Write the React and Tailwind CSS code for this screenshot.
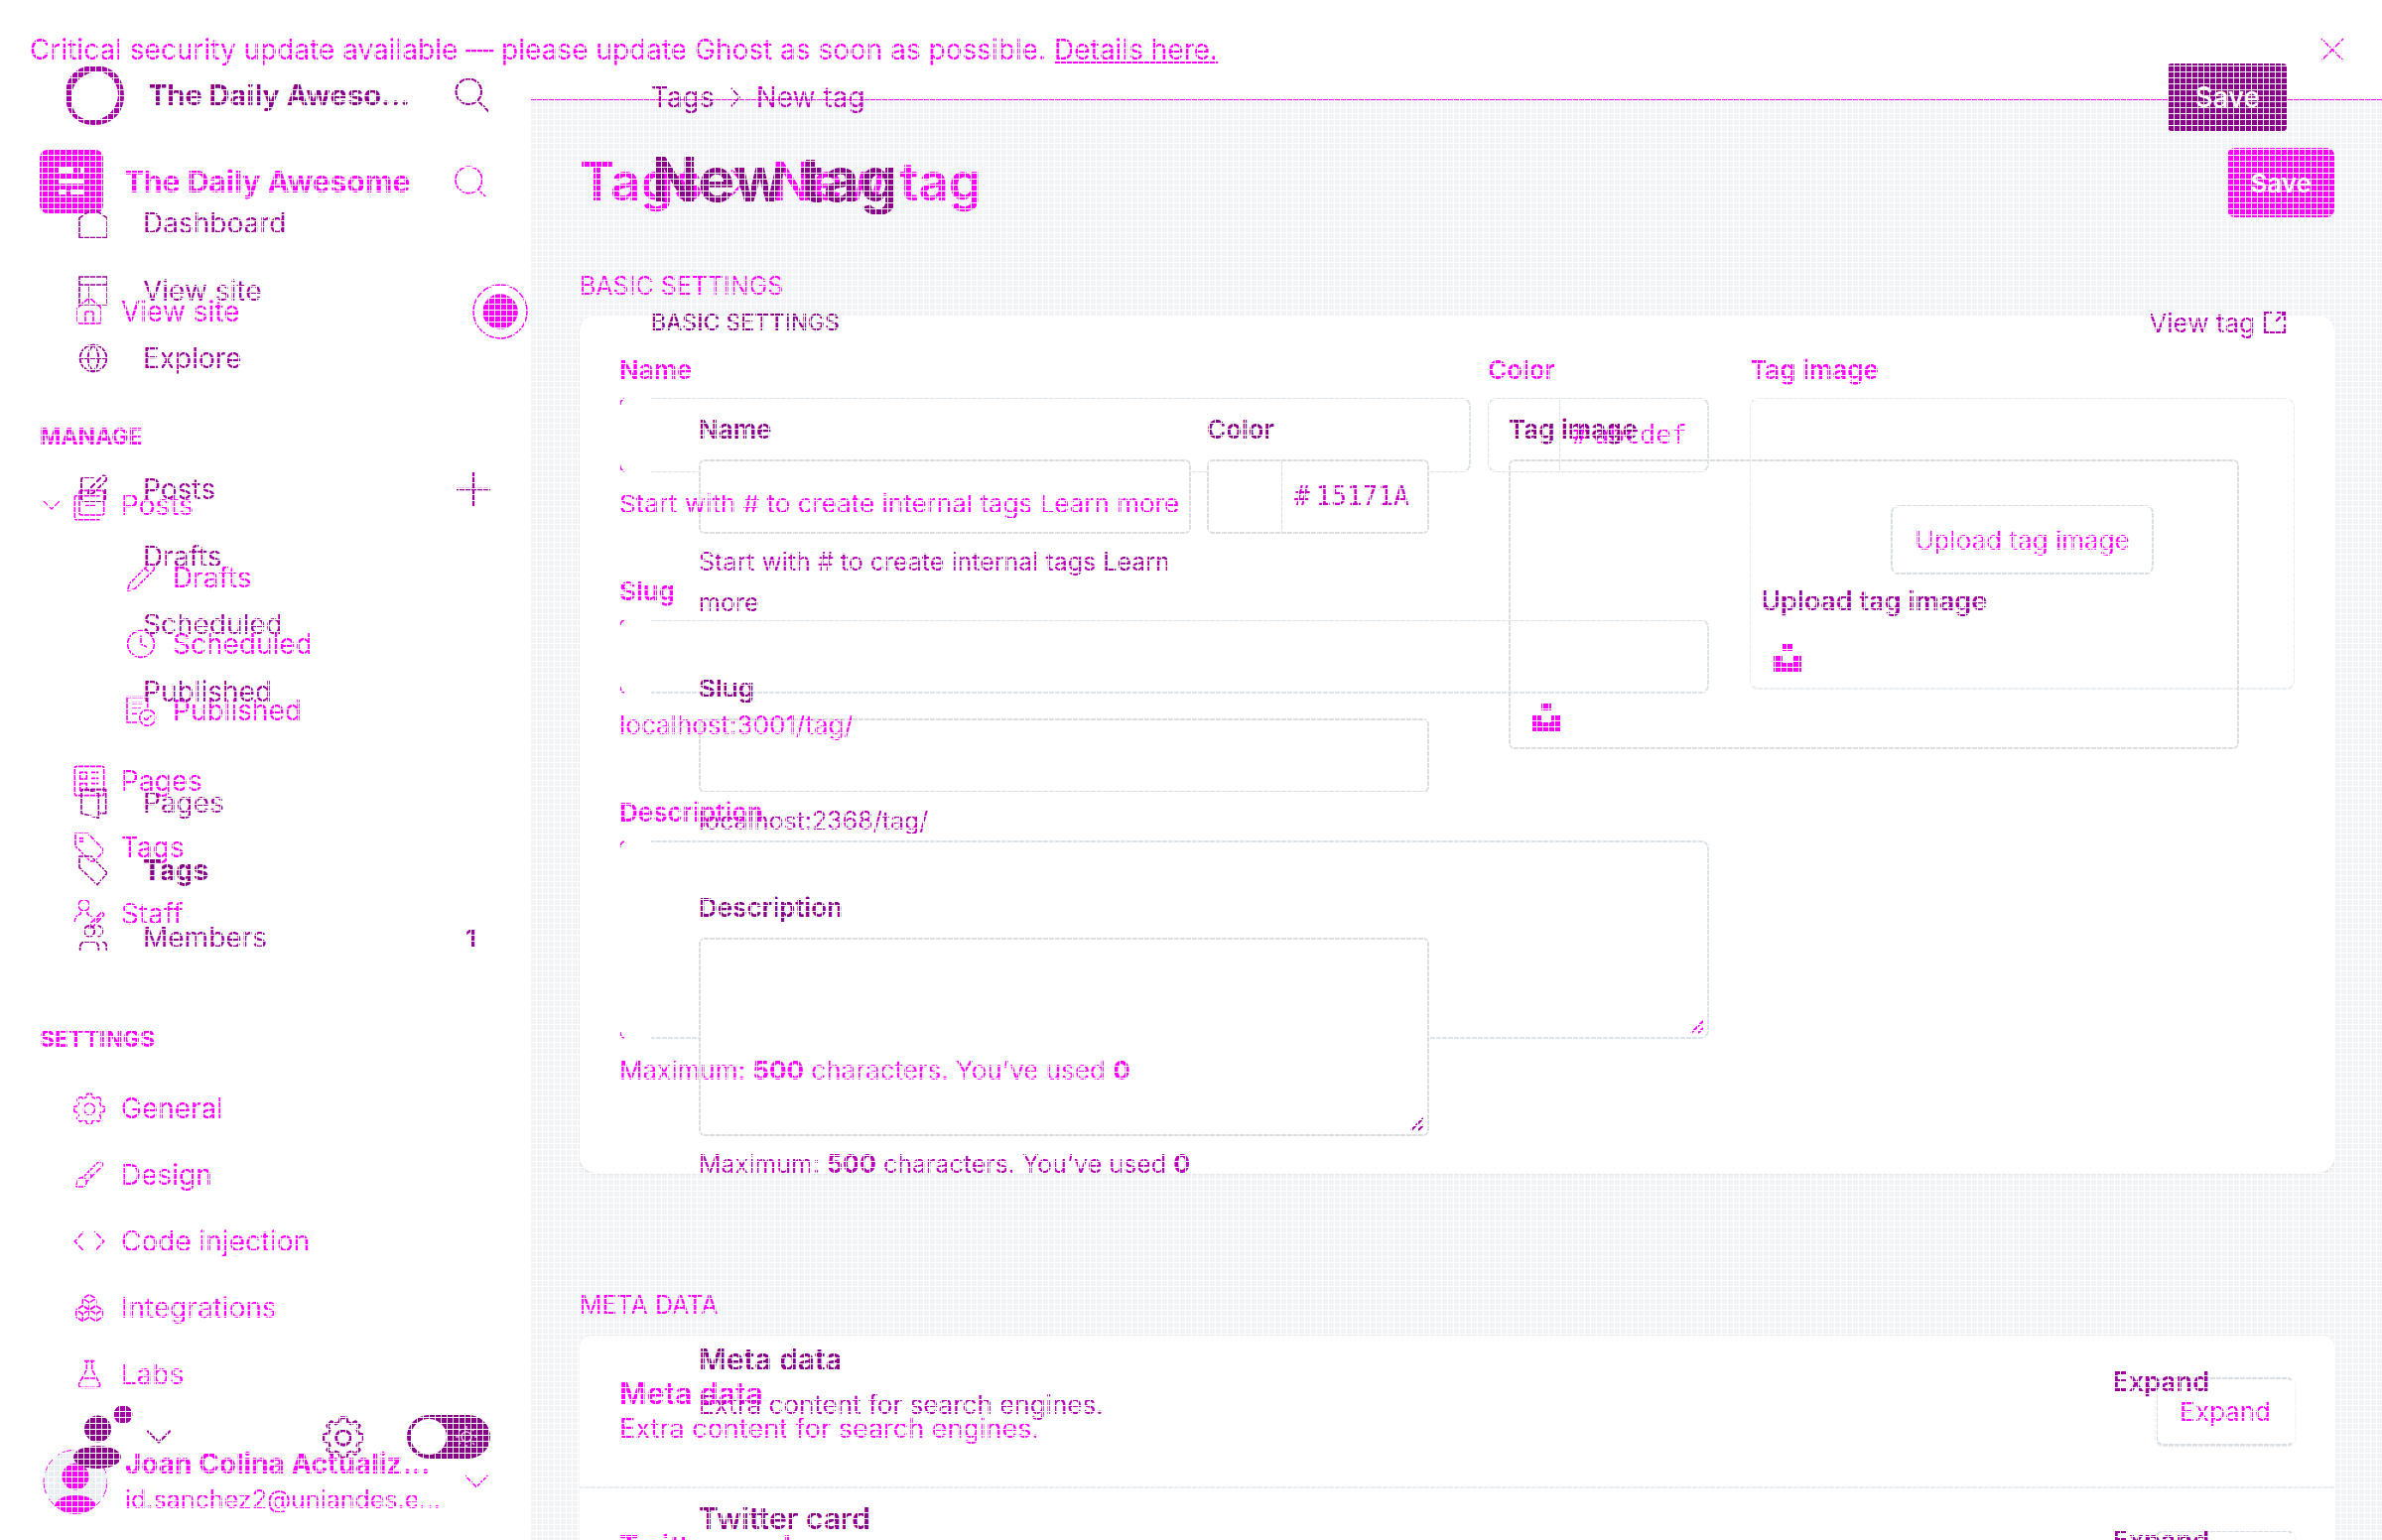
import React from "react";
import {
  Search, House, Pencil, Clock, ChevronDown, Globe,
  Brush, Boxes, FlaskConical, Users, SquarePen,
} from "lucide-react";

const Svg = ({ className = "size-8 shrink-0", children, sw = 1.2, vb = "0 0 24 24" }) => (
  <svg viewBox={vb} className={className} fill="none" stroke="currentColor" strokeWidth={sw} aria-hidden="true">
    {children}
  </svg>
);

const GearIcon = ({ className, sw }) => (
  <Svg className={className} sw={sw}>
    <path d="M9.600 3.600 10.300 1h3.400l.7 2.600 2.100 1 2.400-1.400 2.400 2.400-1.400 2.400 .9 2.100 2.700.8v3.400l-2.700.8-.9 2.100 1.400 2.400-2.400 2.400-2.400-1.400-2.100.9-.7 2.600h-3.400l-.7-2.600-2.100-.9-2.400 1.400-2.400-2.400 1.400-2.400-.9-2.100-2.700-.8v-3.400l2.700-.8.9-2.100-1.400-2.400 2.400-2.400 2.400 1.400z" strokeLinejoin="round" />
    <circle cx="12" cy="12.500" r="4.200" />
  </Svg>
);

const StackIcon = () => (
  <Svg>
    <rect x="4.500" y="1" width="18.500" height="18.500" rx="1.500" />
    <path d="M4.500 5h-2.500q-1 0-1 1V21.500q0 1.500 1.500 1.500H20M7 5h13M7 9h13M9 12.500h8" />
  </Svg>
);
const PagesGridIcon = () => (
  <Svg>
    <rect x="1" y="1" width="22" height="22" rx="1.500" />
    <rect x="5" y="5.500" width="5" height="5" />
    <path d="M13.500 5.500h5.500M13.500 10h5.500M5 14h5v5H5zM13.500 14h5.500M13.500 18.500h5.500" />
  </Svg>
);
const PublishedIcon = () => (
  <Svg>
    <path d="M10 21H1.500V2H17v8M5 6.500h8M5 10.500h7M5 14.500h4" />
    <circle cx="17" cy="17.500" r="6" />
    <path d="m14 17.500 2 2 4-4" />
  </Svg>
);
const TagHoleIcon = () => (
  <Svg>
    <path d="M1.500 1.500h9.500l11 11.500v3l-6.500 6.500h-2.500L1.500 11z" />
    <rect x="5" y="5" width="2.500" height="2.500" />
  </Svg>
);
const StaffIcon = () => (
  <Svg>
    <circle cx="8" cy="5.500" r="4.200" />
    <path d="M5.500 9.500v2.500Q1 13.500 1 18M10.500 9.500v2.500l4 3M12 23l1-4 7.500-7.500q1-1 2 0t0 2L15.500 21zM16 18l4-4" />
  </Svg>
);
const CodeIcon = () => (
  <Svg>
    <path d="M8 4.500 1 12l7 7.500M16 4.500 23 12l-7 7.500" />
  </Svg>
);
const HomeBoxIcon = () => (
  <Svg>
    <path d="M1.500 23V8L12 1l10.500 7v15z" />
  </Svg>
);
const LayoutIcon = () => (
  <Svg>
    <path d="M1.500 1.500h21v21h-21zM1.500 7.500h21M9 7.500v15" />
  </Svg>
);
const PagesBookIcon = () => (
  <Svg>
    <path d="M3 2h18.500v18H17M3 2v18l13 3.500V5L7 2" />
  </Svg>
);
const ExternalIcon = () => (
  <Svg className="size-6" sw={2.2}>
    <path d="M9 2H2v20h20v-8M14 2h8v8M22 2 12 12" />
  </Svg>
);
const UnsplashIcon = () => (
  <svg viewBox="0 0 28 28" className="absolute bottom-4 left-[22px] size-7" fill="#ff00ff" aria-hidden="true">
    <path d="M9 0h10v7H9zM0 12h9v7h10v-7h9v16H0z" />
  </svg>
);
const ResizeGrip = () => (
  <svg viewBox="0 0 16 16" className="absolute bottom-1 right-1 z-20 size-4" fill="none" stroke="currentColor" strokeWidth="2" aria-hidden="true">
    <path d="M2 14 14 2M9 14l5-5" />
  </svg>
);

function CornerMask() {
  return (
    <span className="absolute left-0 top-0 h-full w-8 text-[#ff00ff]" aria-hidden="true">
      <span className="flex h-full flex-col justify-between bg-white">
        <svg viewBox="0 0 8 8" className="size-2" fill="none" stroke="currentColor" strokeWidth="1.500"><path d="M1 7Q1 2 5 1" /></svg>
        <svg viewBox="0 0 8 8" className="size-2" fill="none" stroke="currentColor" strokeWidth="1.500"><path d="M1 1Q1 6 5 7" /></svg>
      </span>
    </span>
  );
}

const aBox = "block h-[75px] w-full rounded-lg border-2 border-[#dae4ea] px-4 text-[26px] outline-none";
const bBox = "relative z-10 block h-[75px] w-full rounded-md border-2 border-[#dedede] bg-white px-4 text-[26px] outline-none";
const aLabel = "mb-1 flex h-[50px] items-center text-[26px] font-semibold";
const bLabel = "mb-1.5 flex h-[50px] items-center text-[26px] font-semibold text-[#8b008b]";
const aHelp = "relative z-20 mt-3 h-10 text-[26px] leading-10 whitespace-nowrap";
const bHelp = "mt-2 text-[25px] leading-[41px] text-[#b800b8]";

function ANav({ icon, children, sub, chevron }) {
  return (
    <a href="#" className={sub ? "flex h-[67px] items-center gap-4 pl-[126px] text-[28px]" : "flex h-[67px] items-center gap-4 text-[28px]"}>
      {!sub && <span className="flex w-[58px] justify-start pl-9">{chevron && <ChevronDown className="-mr-4 size-8 shrink-0" strokeWidth={0.9} />}</span>}
      {icon}
      <span>{children}</span>
    </a>
  );
}

function BaseLayer() {
  const lu = { className: "size-8 shrink-0", strokeWidth: 1.2 };
  return (
    <div className="col-start-1 row-start-1 flex h-screen min-w-0 flex-col overflow-hidden text-[#ff00ff]">
      <header className="flex h-[100px] shrink-0 items-center justify-between bg-white pl-[30px] pr-[38px]">
        <p className="text-[28px]">
          Critical security update available — please update Ghost as soon as possible.{" "}
          <a href="#" className="underline">Details here.</a>
        </p>
        <button type="button" aria-label="Dismiss">
          <Svg className="size-6" sw={1.6}><path d="M1 1l22 22M23 1 1 23" /></Svg>
        </button>
      </header>
      <div className="flex min-h-0 flex-1">
        <aside className="flex w-[535px] shrink-0 flex-col border-r border-[#e5e9ed] bg-white">
          <div className="mt-[50px] flex h-[66px] items-center pl-10 pr-10">
            <svg viewBox="0 0 64 64" className="size-16 shrink-0" aria-hidden="true">
              <rect width="64" height="64" rx="8" fill="#ff00ff" />
              <path d="M19 18h15v6H19zM41 18h4v6h-4zM19 29h26v5H19zM19 40h8v5h-8zM31 40h14v5H31z" fill="#fff" />
            </svg>
            <span className="ml-[21px] flex-1 whitespace-nowrap text-[30px] font-bold">The Daily Awesome</span>
            <button type="button" aria-label="Search"><Search className="size-10" strokeWidth={1} /></button>
          </div>
          <nav className="flex flex-col">
            <div className="mt-16 flex items-center justify-between">
              <ANav icon={<House {...lu} />}>View site</ANav>
              <svg viewBox="0 0 56 56" className="mr-0.5 size-14" fill="none" stroke="currentColor" strokeWidth="1.500" aria-hidden="true">
                <circle cx="28" cy="28" r="27" />
                <circle cx="28" cy="28" r="17" fill="currentColor" />
              </svg>
            </div>
            <h3 className="mt-[60px] flex h-[67px] items-center pl-10 text-[23px] font-bold">MANAGE</h3>
            <div className="mt-px">
              <ANav chevron icon={<StackIcon />}>Posts</ANav>
            </div>
            <div className="mt-1.5 mb-1">
              <ANav sub icon={<Pencil {...lu} />}>Drafts</ANav>
              <ANav sub icon={<Clock {...lu} />}>Scheduled</ANav>
              <ANav sub icon={<PublishedIcon />}>Published</ANav>
            </div>
            <ANav icon={<PagesGridIcon />}>Pages</ANav>
            <ANav icon={<TagHoleIcon />}>Tags</ANav>
            <ANav icon={<StaffIcon />}>Staff</ANav>
            <h3 className="mt-[60px] mb-0.5 flex h-[67px] items-center pl-10 text-[23px] font-bold">SETTINGS</h3>
            <ANav icon={<GearIcon />}>General</ANav>
            <ANav icon={<Brush {...lu} />}>Design</ANav>
            <ANav icon={<CodeIcon />}>Code injection</ANav>
            <ANav icon={<Boxes {...lu} />}>Integrations</ANav>
            <ANav icon={<FlaskConical {...lu} />}>Labs</ANav>
          </nav>
          <div className="mt-auto mb-[26px] flex h-[66px] items-center pl-[43px] pr-8">
            <svg viewBox="0 0 66 66" className="size-[66px] shrink-0" aria-hidden="true">
              <circle cx="33" cy="33" r="32" fill="#e8eef2" stroke="#ff00ff" strokeWidth="1" strokeDasharray="16 6" />
              <circle cx="33" cy="28" r="13.500" fill="#ff00ff" />
              <path d="M12 57c4-8 11-10 21-10s17 2 21 10c-6 6-13 9-21 9s-15-3-21-9z" fill="#ff00ff" />
            </svg>
            <div className="ml-[17px] flex-1 whitespace-nowrap">
              <div className="text-[28px] font-bold leading-9">Joan Colina Actualiz...</div>
              <div className="text-[25px] leading-9">id.sanchez2@uniandes.e...</div>
            </div>
            <ChevronDown className="-ml-4 size-11 shrink-0" strokeWidth={0.9} />
          </div>
        </aside>
        <main className="min-w-0 flex-1 border-t border-[#ff00ff] bg-[#f1f3f6] pl-[49px] pr-12">
          <div className="mt-12 flex h-[70px] items-center justify-between">
            <h2 className="flex items-center text-[53px] font-semibold">
              Tags
              <Svg vb="0 0 12 24" className="mx-7 h-7 w-3.5" sw={2}><path d="M1 1l10 11L1 23" /></Svg>
              New tag
            </h2>
            <button type="button" className="h-[70px] rounded-lg bg-[#ff00ff] px-[23px] text-[26px] font-semibold text-white">Save</button>
          </div>
          <h3 className="mt-[47px] mb-1.5 flex h-[46px] items-center text-[25px]">BASIC SETTINGS</h3>
          <section className="grid grid-cols-[2fr_1fr] gap-[41px] rounded-2xl bg-white px-10 pt-[29px] pb-[83px] shadow-sm">
            <div>
              <div className="flex gap-[17px]">
                <div className="flex-1">
                  <label htmlFor="a-name" className={aLabel}>Name</label>
                  <div className="relative"><input id="a-name" className={aBox} /><CornerMask /></div>
                </div>
                <div className="w-[223px]">
                  <label htmlFor="a-color" className={aLabel}>Color</label>
                  <div className="flex h-[75px] items-center rounded-lg border-2 border-[#dae4ea]">
                    <span className="h-full w-[71px] shrink-0 border-r border-[#dae4ea]" />
                    <span className="ml-3 font-['DejaVu_Sans_Mono',monospace] text-[26px]">#</span>
                    <input id="a-color" placeholder="abcdef" className="ml-1.5 min-w-0 flex-1 font-['DejaVu_Sans_Mono',monospace] text-[26px] outline-none placeholder:text-[#ff00ff]" />
                  </div>
                </div>
              </div>
              <p className={aHelp}>Start with # to create internal tags <a href="#">Learn more</a></p>
              <label htmlFor="a-slug" className={"mt-[42px] " + aLabel}>Slug</label>
              <div className="relative"><input id="a-slug" className={aBox} /><CornerMask /></div>
              <p className={aHelp}>localhost:3001/tag/</p>
              <label htmlFor="a-desc" className={"mt-[42px] " + aLabel}>Description</label>
              <div className="relative">
                <textarea id="a-desc" className="block h-[200px] w-full resize-none rounded-lg border-2 border-[#dae4ea] px-4 text-[26px] outline-none" />
                <CornerMask />
                <ResizeGrip />
              </div>
              <p className={aHelp}>Maximum: <b>500</b> characters. You’ve used <b>0</b></p>
            </div>
            <div>
              <div className={aLabel}>Tag image</div>
              <div className="relative flex h-[294px] items-center justify-center rounded-lg border-2 border-[#e8eef2]">
                <button type="button" className="mb-2 h-[70px] rounded-lg border-2 border-[#d8e0e5] px-[22px] text-[26px]">Upload tag image</button>
                <UnsplashIcon />
              </div>
            </div>
          </section>
          <h3 className="mt-[111px] mb-1.5 flex h-[46px] items-center text-[25px]">META DATA</h3>
          <section className="rounded-t-xl border-t border-[#e5e9ed] bg-white">
            {[["Meta data", "Extra content for search engines."], ["Twitter card", "Customized structured data for Twitter"]].map(([t, s]) => (
              <div key={t} className="flex h-[154px] items-center justify-between border-b-2 border-[#e8eef2] px-10">
                <div>
                  <h4 className="text-[30px] font-semibold leading-9">{t}</h4>
                  <p className="text-[27px] leading-9">{s}</p>
                </div>
                <button type="button" className="h-[69px] rounded-lg border-2 border-r-white border-[#d8e0e5] px-[22px] text-[26px] shadow-sm">Expand</button>
              </div>
            ))}
          </section>
        </main>
      </div>
    </div>
  );
}

function BNav({ icon, children, bold, extra }) {
  return (
    <a href="#" className="flex h-[68px] items-center pl-[78px] pr-10">
      <span className="flex w-[66px] shrink-0">{icon}</span>
      <span className={bold ? "flex-1 text-[28px] font-bold text-[#8b008b]" : "flex-1 text-[28px]"}>{children}</span>
      {extra}
    </a>
  );
}

function TopLayer() {
  const lu = { className: "size-8 shrink-0", strokeWidth: 1.4 };
  return (
    <div className="relative col-start-1 row-start-1 flex h-screen min-w-0 overflow-hidden text-[#9d009d]">
      <aside className="flex w-[534px] shrink-0 flex-col">
        <div className="mt-[66px] flex h-[60px] items-center pl-[65px] pr-10">
          <svg viewBox="0 0 60 60" className="size-[60px] shrink-0" aria-hidden="true">
            <path fillRule="evenodd" fill="#a800a8" d="M30 0C48 0 60 12 60 30S48 60 30 60 1 48 1 30 12 0 30 0zM31 6C17 9 7 18 7 33s8 22 22 22 25-13 25-26S42 5 31 6z" />
          </svg>
          <span className="ml-6 flex-1 whitespace-nowrap text-[29px] font-bold text-[#8b008b]">The Daily Aweso...</span>
          <button type="button" aria-label="Search site">
            <Svg className="size-9" sw={1.4}><circle cx="9.500" cy="9.500" r="8.500" /><path d="m16 16 7 7" /></Svg>
          </button>
        </div>
        <nav className="mt-[65px] flex flex-col">
          <BNav icon={<HomeBoxIcon />}>Dashboard</BNav>
          <BNav icon={<LayoutIcon />}>View site</BNav>
          <BNav icon={<Globe {...lu} />}>Explore</BNav>
          <div className="mt-16">
            <BNav
              icon={<SquarePen {...lu} />}
              extra={<Svg className="size-[34px]" sw={1.6}><path d="M12 0v24M0 12h24" /></Svg>}
            >Posts</BNav>
            <BNav>Drafts</BNav>
            <BNav>Scheduled</BNav>
            <BNav>Published</BNav>
          </div>
          <div className="mt-11">
            <BNav icon={<PagesBookIcon />}>Pages</BNav>
            <BNav bold icon={<Svg><path d="M1.500 1.500h9L22.500 14 15 23 1.500 10z" /></Svg>}>Tags</BNav>
            <BNav icon={<Users {...lu} />} extra={<span className="mr-3.5 text-[26px] font-semibold">1</span>}>Members</BNav>
          </div>
        </nav>
        <div className="mt-auto mb-[72px] flex h-16 items-center pl-[74px] pr-10">
          <svg viewBox="0 0 60 64" className="h-16 w-[60px]" fill="#8b008b" aria-hidden="true">
            <circle cx="24.500" cy="24" r="13.500" />
            <ellipse cx="24" cy="52.500" rx="24" ry="11.500" />
            <circle cx="50" cy="9.500" r="9.500" fill="#a800a8" />
          </svg>
          <ChevronDown className="ml-1 size-11" strokeWidth={1.2} />
          <button type="button" aria-label="Settings" className="ml-auto"><GearIcon className="size-[42px]" sw={1.6} /></button>
          <button type="button" role="switch" aria-checked="false" aria-label="Night mode" className="ml-[43px] flex h-11 w-[84px] items-center rounded-full bg-[#8b008b] pl-1">
            <span className="size-9 rounded-full bg-white" />
            <Svg className="ml-2 size-6 text-[#e0b0e0]" sw={1.6}>
              <circle cx="12" cy="12" r="5" />
              <path d="M12 1v3M12 20v3M1 12h3M20 12h3M4 4l2 2M18 18l2 2M4 20l2-2M18 6l2-2" />
            </Svg>
          </button>
        </div>
      </aside>
      <main className="min-w-0 flex-1 pl-[122px] pr-24">
        <div className="mt-16 flex h-[68px] items-center justify-between">
          <nav className="flex items-center text-[28px]" aria-label="Breadcrumb">
            <a href="#">Tags</a>
            <Svg vb="0 0 12 24" className="mx-4 h-5 w-2.5" sw={2}><path d="M1 1l10 11L1 23" /></Svg>
            <span className="text-[#c000c0]">New tag</span>
          </nav>
          <button type="button" className="h-[68px] rounded bg-[#8b008b] px-[27px] text-[28px] font-medium text-white">Save</button>
        </div>
        <h1 className="mt-2 flex h-20 items-center text-[62px] font-bold text-[#8b008b]">New tag</h1>
        <div className="mt-[85px] flex h-10 items-center justify-between">
          <h2 className="text-[23px] font-medium text-[#8b008b]">BASIC SETTINGS</h2>
          <a href="#" className="flex items-center gap-2 text-[26px] text-[#b800b8]">View tag <ExternalIcon /></a>
        </div>
        <section className="mt-[62px] grid grid-cols-2 gap-20 px-12">
          <div>
            <div className="flex gap-4">
              <div className="flex-1">
                <label htmlFor="b-name" className={bLabel}>Name</label>
                <input id="b-name" className={bBox} />
                <p className={bHelp}>Start with # to create internal tags <a href="#" className="whitespace-pre-line text-[#9d009d]">{"Learn\nmore"}</a></p>
              </div>
              <div className="w-56">
                <label htmlFor="b-color" className={bLabel}>Color</label>
                <div className="relative z-10 flex h-[75px] items-center rounded-md border-2 border-[#dedede] bg-white">
                  <span className="h-full w-[74px] shrink-0 border-r border-[#dedede]" />
                  <span className="ml-3 font-['DejaVu_Sans_Mono',monospace] text-[26px] text-[#c800c8]">#</span>
                  <input id="b-color" defaultValue="15171A" className="ml-1.5 min-w-0 flex-1 font-['DejaVu_Sans_Mono',monospace] text-[26px] text-[#c800c8] outline-none" />
                </div>
              </div>
            </div>
            <label htmlFor="b-slug" className={"mt-10 " + bLabel}>Slug</label>
            <input id="b-slug" className={bBox} />
            <p className={bHelp}>localhost:2368/tag/</p>
            <label htmlFor="b-desc" className={"mt-[41px] " + bLabel}>Description</label>
            <div className="relative z-10">
              <textarea id="b-desc" className="block h-[200px] w-full resize-none rounded-md border-2 border-[#dedede] bg-white px-4 text-[26px] outline-none" />
              <ResizeGrip />
            </div>
            <p className={bHelp}>Maximum: <b>500</b> characters. You’ve used <b>0</b></p>
          </div>
          <div>
            <div className={bLabel}>Tag image</div>
            <div className="relative flex h-[292px] items-center justify-center rounded-md border-2 border-[#dedede]">
              <button type="button" className="mb-1.5 text-[27px] font-semibold">Upload tag image</button>
              <UnsplashIcon />
            </div>
          </div>
        </section>
        <section className="mt-[153px] flex flex-col gap-[68px] px-12">
          {[["Meta data", "Extra content for search engines."], ["Twitter card", "Customized structured data for Twitter"]].map(([t, s]) => (
            <div key={t} className="flex h-[92px] items-center justify-between">
              <div>
                <h3 className="text-[30px] font-semibold leading-[46px] text-[#8b008b]">{t}</h3>
                <p className="text-[26px] leading-[46px] text-[#b800b8]">{s}</p>
              </div>
              <button type="button" className="px-[30px] text-[27px] font-semibold">Expand</button>
            </div>
          ))}
        </section>
      </main>
    </div>
  );
}

export default function App() {
  return (
    <div className="grid h-screen grid-cols-1 overflow-hidden bg-white font-['Inter',sans-serif]">
      <BaseLayer />
      <TopLayer />
      <div
        aria-hidden="true"
        className="pointer-events-none fixed inset-0 z-50 bg-[linear-gradient(to_right,#ffffff_1px,transparent_1px),linear-gradient(to_bottom,#ffffff_1px,transparent_1px)] bg-[length:6px_6px]"
      />
    </div>
  );
}
